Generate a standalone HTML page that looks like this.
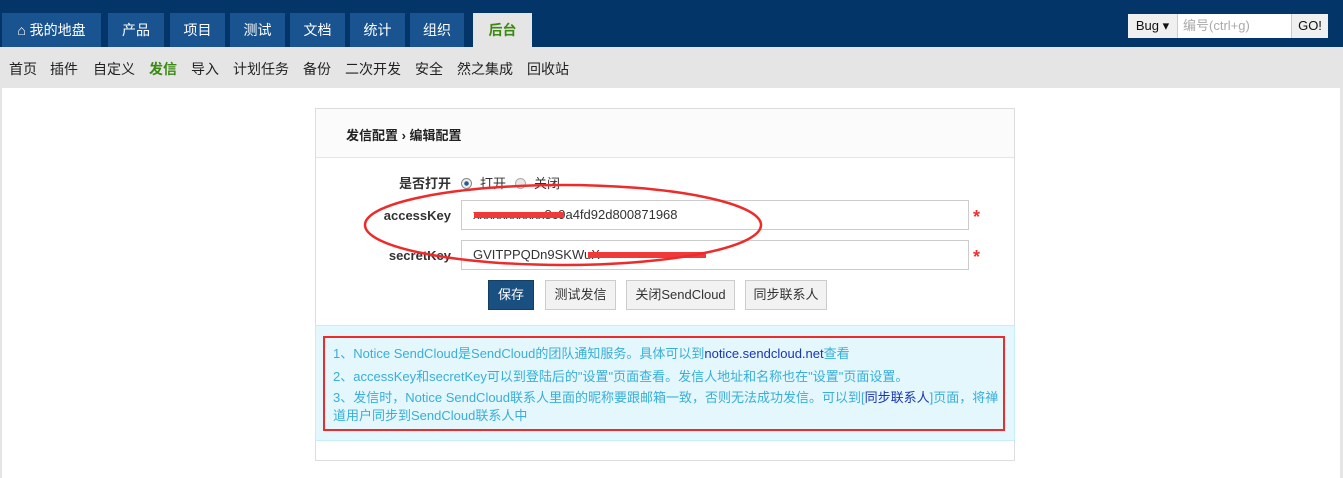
<!DOCTYPE html><html><head><meta charset="utf-8"><style>
*{margin:0;padding:0;box-sizing:border-box}
body{width:1343px;height:475px;overflow:hidden;background:#e5e5e5;font-family:"Liberation Sans","Noto Sans CJK SC",sans-serif;font-size:13px;color:#333;position:relative}
.a{position:absolute}
.top{left:0;top:0;width:1343px;height:47px;background:#033568}
.tab{top:13px;height:34px;background:#1a5490;color:#fff;font-size:14px;line-height:34px;text-align:center}
.sub{top:47px;left:0;width:1343px;height:40px}
.sub span{position:absolute;top:12px;font-size:14px;color:#222}
.main{left:2px;top:88px;width:1338px;height:390px;background:#fff}
.panel{left:315px;top:108px;width:700px;height:353px;border:1px solid #ddd;background:#fff}
.inp{height:30px;border:1px solid #ccc;background:#fff;font-size:13px;line-height:28px;padding-left:11px;color:#333}
.btn{top:280px;height:30px;border:1px solid #ccc;background:#f2f2f2;line-height:28px;text-align:center;font-size:13px;color:#333}
.lbl{font-weight:bold;font-size:13px;color:#333;text-align:right}
.info{left:315px;top:325px;width:700px;height:116px;background:#e3f7fc;border:1px solid #c4eefa}
.info p{position:absolute;left:333px;color:#3aaed8;font-size:13px}
.red{background:#f03a3a;height:6px}
</style></head><body>
<div class="a top"></div>
<div class="a tab" style="left:2px;width:99px">&#8962; 我的地盘</div>
<div class="a tab" style="left:108px;width:56px">产品</div>
<div class="a tab" style="left:170px;width:55px">项目</div>
<div class="a tab" style="left:230px;width:55px">测试</div>
<div class="a tab" style="left:290px;width:55px">文档</div>
<div class="a tab" style="left:350px;width:55px">统计</div>
<div class="a tab" style="left:410px;width:54px">组织</div>
<div class="a tab" style="left:473px;width:59px;background:#e5e5e5;color:#3c8a13;font-weight:bold">后台</div>
<div class="a" style="left:1128px;top:14px;width:49px;height:24px;background:#f0f0f0;font-size:13px;line-height:24px;text-align:center;color:#111">Bug &#9662;</div>
<div class="a" style="left:1177px;top:14px;width:114px;height:24px;background:#fff;border-left:1px solid #ccc;font-size:13px;line-height:24px;padding-left:5px;color:#aaa">编号(ctrl+g)</div>
<div class="a" style="left:1291px;top:14px;width:37px;height:24px;background:#f0f0f0;border-left:1px solid #ccc;font-size:13px;line-height:24px;text-align:center;color:#111">GO!</div>
<div class="a sub">
<span style="left:9px">首页</span><span style="left:50px">插件</span><span style="left:93px">自定义</span><span style="left:149px;color:#3c8a13;font-weight:bold">发信</span><span style="left:191px">导入</span><span style="left:233px">计划任务</span><span style="left:303px">备份</span><span style="left:345px">二次开发</span><span style="left:415px">安全</span><span style="left:457px">然之集成</span><span style="left:527px">回收站</span>
</div>
<div class="a main"></div>
<div class="a panel"><div style="position:absolute;left:0;top:48px;width:698px;border-top:1px solid #e5e5e5"></div><div style="position:absolute;left:0;top:0;width:698px;height:48px;background:#fbfbfb"></div><div style="position:absolute;left:30px;top:16px;font-weight:bold;font-size:13px;color:#222">发信配置 › 编辑配置</div></div>
<div class="a lbl" style="left:380px;top:173px;width:71px">是否打开</div>
<div class="a" style="left:461px;top:178px;width:11px;height:11px;border-radius:50%;border:1px solid #888;background:radial-gradient(#1d5c94 30%,#eee 40%)"></div>
<div class="a" style="left:480px;top:173px">打开</div>
<div class="a" style="left:515px;top:178px;width:11px;height:11px;border-radius:50%;border:1px solid #aaa;background:#e8e8e8"></div>
<div class="a" style="left:534px;top:173px">关闭</div>
<div class="a lbl" style="left:360px;top:208px;width:91px">accessKey</div>
<div class="a inp" style="left:461px;top:200px;width:508px">xxxxxxxxxxx8c9a4fd92d800871968</div>
<div class="a red" style="left:474px;top:212px;width:90px"></div>
<div class="a" style="left:973px;top:207px;color:#e33;font-size:18px;font-weight:bold">*</div>
<div class="a lbl" style="left:360px;top:248px;width:91px">secretKey</div>
<div class="a inp" style="left:461px;top:240px;width:508px">GVITPPQDn9SKWuX</div>
<div class="a red" style="left:588px;top:252px;width:118px"></div>
<div class="a" style="left:973px;top:247px;color:#e33;font-size:18px;font-weight:bold">*</div>
<svg class="a" style="left:360px;top:180px" width="410" height="90"><ellipse cx="203" cy="45" rx="198" ry="40" fill="none" stroke="#ee2b2b" stroke-width="2.5"/></svg>
<div class="a btn" style="left:488px;width:46px;background:#1a4f82;border-color:#133e66;color:#fff">保存</div>
<div class="a btn" style="left:545px;width:71px">测试发信</div>
<div class="a btn" style="left:626px;width:109px">关闭SendCloud</div>
<div class="a btn" style="left:745px;width:82px">同步联系人</div>
<div class="a info"></div>
<div class="a" style="left:323px;top:336px;width:682px;height:95px;border:2px solid #ee2b2b"></div>
<p class="a" style="left:333px;top:343px;color:#3aaed8">1、Notice SendCloud是SendCloud的团队通知服务。具体可以到<span style="color:#1a35b8">notice.sendcloud.net</span>查看</p>
<p class="a" style="left:333px;top:366px;color:#3aaed8">2、accessKey和secretKey可以到登陆后的"设置"页面查看。发信人地址和名称也在"设置"页面设置。</p>
<p class="a" style="left:333px;top:389px;color:#3aaed8;width:670px;line-height:18px">3、发信时，Notice SendCloud联系人里面的昵称要跟邮箱一致，否则无法成功发信。可以到[<span style="color:#1a35b8">同步联系人</span>]页面，将禅道用户同步到SendCloud联系人中</p>
</body></html>
